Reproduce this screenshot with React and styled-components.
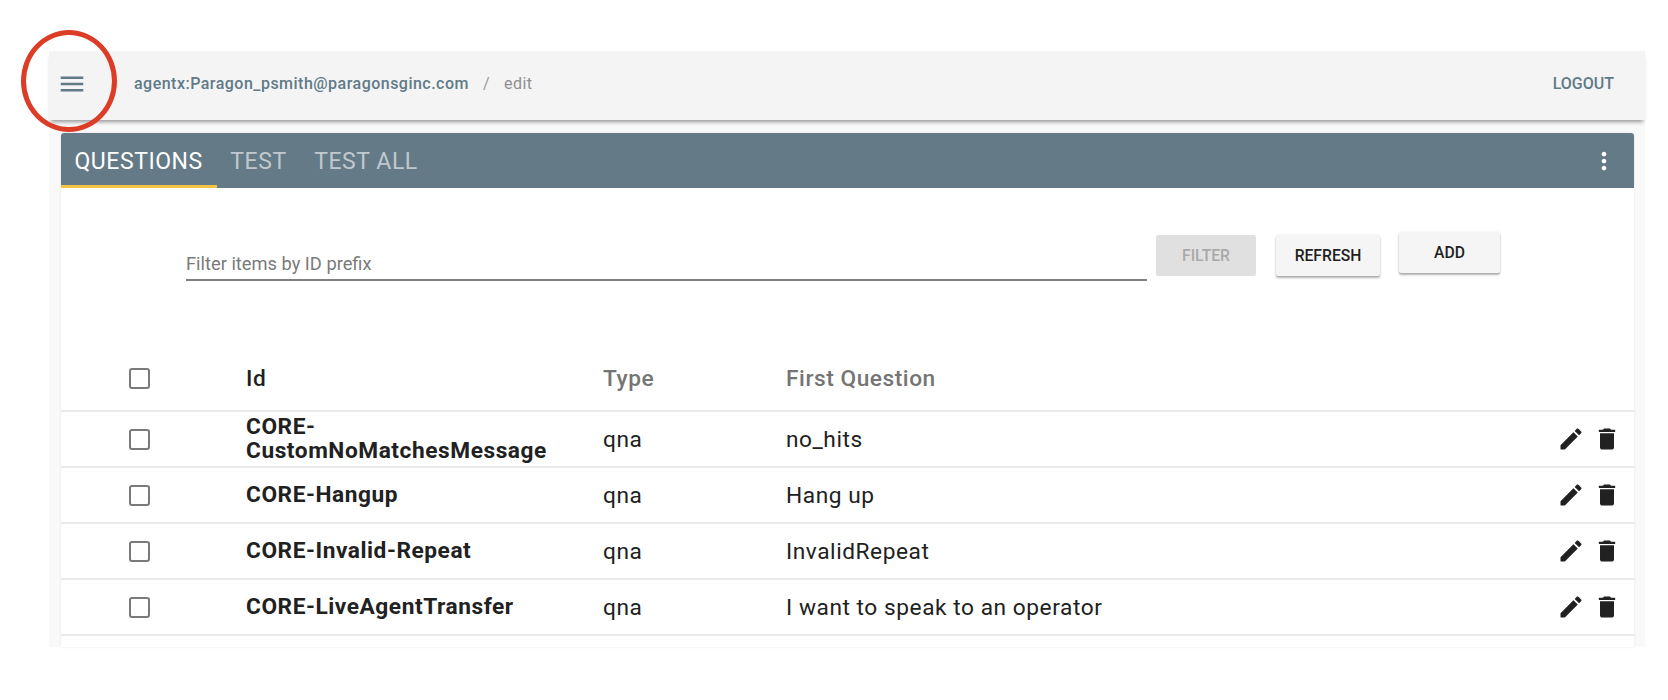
import React from 'react';
import styled, { createGlobalStyle } from 'styled-components';

const GlobalStyle = createGlobalStyle`
  html, body {
    margin: 0;
    background: #fff;
    font-family: Roboto, "Liberation Sans", sans-serif;
  }
`;

const rows = [
  { id: 'CORE-CustomNoMatchesMessage', type: 'qna', question: 'no_hits' },
  { id: 'CORE-Hangup', type: 'qna', question: 'Hang up' },
  { id: 'CORE-Invalid-Repeat', type: 'qna', question: 'InvalidRepeat' },
  { id: 'CORE-LiveAgentTransfer', type: 'qna', question: 'I want to speak to an operator' },
];

const MenuIcon = () => (
  <svg viewBox="0 0 24 24" width="30" height="30" fill="currentColor">
    <path d="M3 18h18v-2H3v2zm0-5h18v-2H3v2zm0-7v2h18V6H3z" />
  </svg>
);

const MoreIcon = () => (
  <svg viewBox="0 0 24 24" width="28" height="28" fill="currentColor">
    <path d="M12 8c1.1 0 2-.9 2-2s-.9-2-2-2-2 .9-2 2 .9 2 2 2zm0 2c-1.1 0-2 .9-2 2s.9 2 2 2 2-.9 2-2-.9-2-2-2zm0 6c-1.1 0-2 .9-2 2s.9 2 2 2 2-.9 2-2-.9-2-2-2z" />
  </svg>
);

const EditIcon = () => (
  <svg viewBox="0 0 24 24" width="28" height="28" fill="currentColor">
    <path d="M3 17.25V21h3.75L17.81 9.94l-3.75-3.75L3 17.25zM20.71 7.04c.39-.39.39-1.02 0-1.41l-2.34-2.34c-.39-.39-1.02-.39-1.41 0l-1.83 1.83 3.75 3.75 1.83-1.83z" />
  </svg>
);

const DeleteIcon = () => (
  <svg viewBox="0 0 24 24" width="28" height="28" fill="currentColor">
    <path d="M6 19c0 1.1.9 2 2 2h8c1.1 0 2-.9 2-2V7H6v12zM19 4h-3.5l-1-1h-5l-1 1H5v2h14V4z" />
  </svg>
);

const App = () => {
  return (
    <Screen>
      <GlobalStyle />
      <Annotation />
      <Page>
        <Header>
          <MenuButton><MenuIcon /></MenuButton>
          <Crumb>agentx:Paragon_psmith@paragonsginc.com</Crumb>
          <CrumbSep>/</CrumbSep>
          <CrumbCurrent>edit</CrumbCurrent>
          <Logout>LOGOUT</Logout>
        </Header>
        <Card>
          <TabBar>
            <Tab $active>QUESTIONS</Tab>
            <Tab>TEST</Tab>
            <Tab>TEST ALL</Tab>
            <Kebab><MoreIcon /></Kebab>
          </TabBar>
          <Toolbar>
            <FilterField>Filter items by ID prefix</FilterField>
            <Button $disabled>FILTER</Button>
            <Button>REFRESH</Button>
            <Button $raised>ADD</Button>
          </Toolbar>
          <HeadRow>
            <Check />
            <HeadCell $dark>Id</HeadCell>
            <HeadCell>Type</HeadCell>
            <HeadCell>First Question</HeadCell>
          </HeadRow>
          {rows.map((row) => (
            <Row key={row.id}>
              <Check />
              <IdCell>{row.id}</IdCell>
              <Cell>{row.type}</Cell>
              <Cell>{row.question}</Cell>
              <Actions>
                <EditIcon />
                <DeleteIcon />
              </Actions>
            </Row>
          ))}
        </Card>
      </Page>
    </Screen>
  );
};

const Screen = styled.div`
  position: relative;
  height: 700px;
  padding-top: 51px;
  box-sizing: border-box;
  overflow: hidden;
`;

const Annotation = styled.div`
  position: absolute;
  left: 21px;
  top: 30px;
  width: 96px;
  height: 102px;
  box-sizing: border-box;
  border: 5.5px solid #dc3d26;
  border-radius: 50%;
  z-index: 3;
`;

const Page = styled.div`
  width: 1596px;
  height: 596px;
  margin-left: 49px;
  background: #f9f9f9;
`;

const Header = styled.header`
  display: flex;
  align-items: center;
  height: 69px;
  padding: 0 31px 4px 8px;
  box-sizing: border-box;
  background: #f4f4f4;
  box-shadow: 0 4px 4px -2px rgba(0, 0, 0, 0.4);
  position: relative;
  z-index: 1;
  font-size: 16px;
  letter-spacing: 0.48px;
`;

const MenuButton = styled.div`
  display: flex;
  width: 30px;
  height: 30px;
  margin-right: 47px;
  color: #607a88;
`;

const Crumb = styled.span`
  color: #5f7a88;
  font-weight: 500;
`;

const CrumbSep = styled.span`
  margin-left: 14px;
  color: #9a9a9a;
`;

const CrumbCurrent = styled.span`
  margin-left: 14px;
  color: #8f8f8f;
`;

const Logout = styled.span`
  margin-left: auto;
  color: #5f7a88;
  font-weight: 500;
  letter-spacing: 0;
`;

const Card = styled.main`
  margin: 13px 11px 0 12px;
  height: 514px;
  background: #fff;
  border-radius: 3px 3px 0 0;
  box-shadow: 0 0 3px rgba(0, 0, 0, 0.08);
  overflow: hidden;
`;

const TabBar = styled.nav`
  display: flex;
  align-items: stretch;
  height: 55px;
  background: #647a87;
  font-size: 23px;
  font-weight: 400;
  letter-spacing: 0.55px;
`;

const Tab = styled.div`
  display: flex;
  align-items: center;
  padding: 5px 14px 0 13.5px;
  color: ${(p) => (p.$active ? '#fff' : 'rgba(255, 255, 255, 0.6)')};
  border-bottom: 3px solid ${(p) => (p.$active ? '#f6c445' : 'transparent')};
  box-sizing: border-box;
`;

const Kebab = styled.div`
  display: flex;
  align-items: center;
  margin-left: auto;
  margin-right: 16px;
  color: #fff;
`;

const Toolbar = styled.div`
  display: flex;
  align-items: flex-start;
  height: 164px;
  padding: 47px 0 0 125px;
  box-sizing: border-box;
`;

const FilterField = styled.div`
  width: 961px;
  height: 46px;
  margin-right: 9px;
  box-sizing: border-box;
  padding-top: 18px;
  border-bottom: 2px solid #7f7f7f;
  color: #7a7a7a;
  font-size: 18.3px;
  line-height: 21px;
`;

const Button = styled.div`
  display: flex;
  align-items: center;
  justify-content: center;
  width: ${(p) => (p.$raised ? '101px' : p.$disabled ? '100px' : '104px')};
  height: 41px;
  padding-bottom: 1px;
  box-sizing: border-box;
  margin-right: ${(p) => (p.$disabled ? '20px' : '19px')};
  margin-top: ${(p) => (p.$raised ? '-3px' : '0')};
  border-radius: 2px;
  font-size: 15.7px;
  font-weight: 500;
  color: ${(p) => (p.$disabled ? '#a9a9a9' : '#1f1f1f')};
  background: ${(p) => (p.$disabled ? '#e0e0e0' : '#f5f5f5')};
  box-shadow: ${(p) => (p.$disabled ? 'none' : '0 2px 2px rgba(0, 0, 0, 0.3), 0 0 2px rgba(0, 0, 0, 0.1)')};
`;

const gridColumns = `
  display: grid;
  grid-template-columns: 117px 357px 183px 1fr 80px;
  align-items: center;
  padding-left: 68px;
  border-bottom: 2px solid #eaeaea;
  box-sizing: border-box;
`;

const HeadRow = styled.div`
  ${gridColumns}
  height: 60px;
  padding-bottom: 5px;
  grid-template-columns: 117px 357px 183px 1fr;
`;

const Row = styled.div`
  ${gridColumns}
  height: 56.1px;
`;

const Check = styled.span`
  display: block;
  width: 21px;
  height: 21px;
  box-sizing: border-box;
  border: 2px solid #7a7a7a;
  border-radius: 3px;
`;

const HeadCell = styled.div`
  font-size: 22.7px;
  font-weight: 500;
  letter-spacing: 0.55px;
  color: ${(p) => (p.$dark ? '#1f1f1f' : '#757575')};
`;

const IdCell = styled.div`
  width: 320px;
  font-size: 22.7px;
  font-weight: 700;
  line-height: 24.5px;
  letter-spacing: 0.55px;
  color: #212121;
`;

const Cell = styled.div`
  font-size: 22.7px;
  letter-spacing: 0.55px;
  color: #212121;
`;

const Actions = styled.div`
  display: flex;
  justify-content: flex-end;
  gap: 8px;
  padding-right: 13px;
  color: #212121;
`;

export default App;
